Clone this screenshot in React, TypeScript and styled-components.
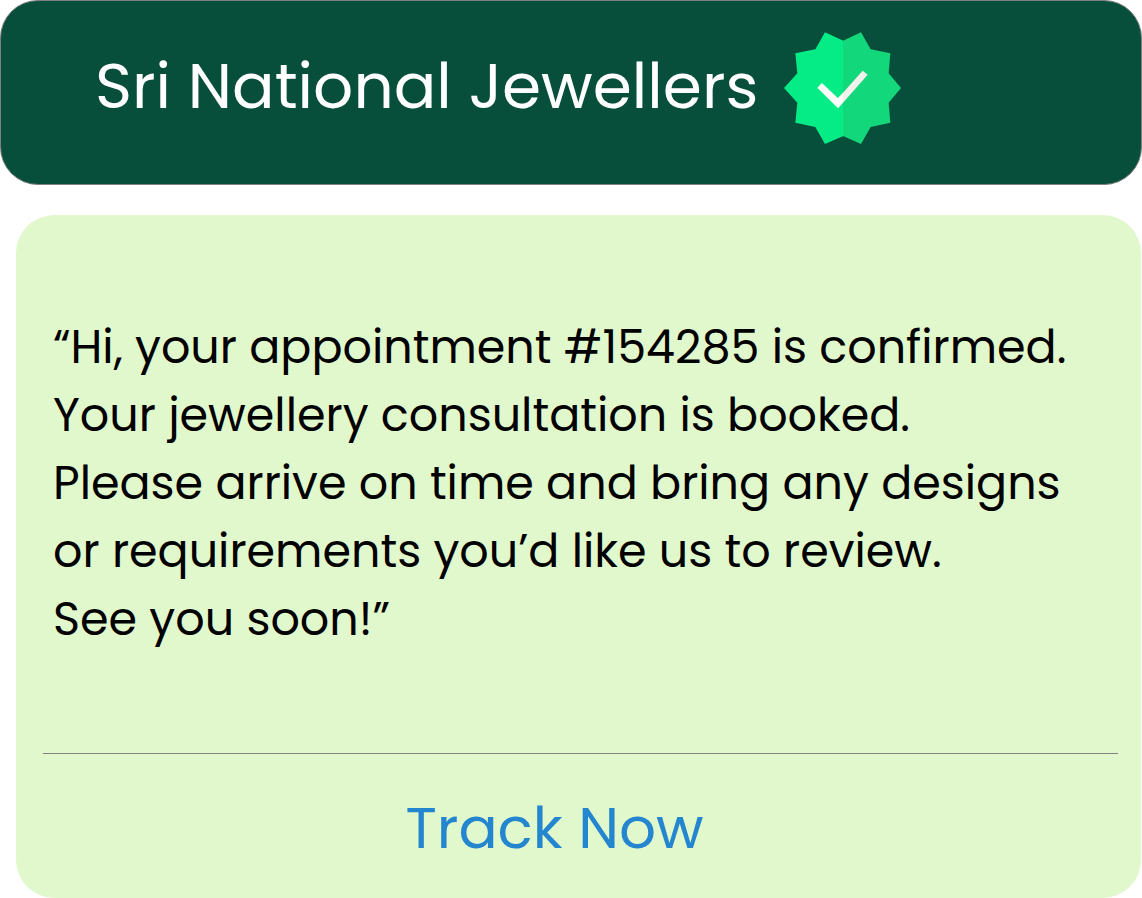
import React from "react";
import styled, { createGlobalStyle } from "styled-components";

const GlobalStyle = createGlobalStyle`
  body {
    margin: 0;
    background: #ffffff;
    font-family: Poppins, Inter, "Liberation Sans", sans-serif;
  }
`;

const Page = styled.main`
  display: flex;
  flex-direction: column;
  gap: 30px;
`;

const Header = styled.header`
  display: flex;
  align-items: flex-start;
  gap: 26px;
  padding: 31px 94px 40px;
  border: 1px solid #808080;
  border-radius: 38px;
  background: #084f3b;
`;

const Title = styled.h1`
  margin: 0;
  color: #ffffff;
  font-size: 63px;
  font-weight: 400;
  line-height: 108px;
  white-space: nowrap;
`;

const Badge = styled.svg`
  flex: none;
  display: block;
  width: 117px;
  height: 112px;
`;

const Card = styled.section`
  margin: 0 1px 0 16px;
  padding: 98px 23px 28px 27px;
  border-radius: 38px;
  background: #e1f8cd;
`;

const Message = styled.p`
  margin: 0;
  padding-left: 10px;
  color: #000000;
  font-size: 46px;
  line-height: 68px;
  white-space: nowrap;
`;

const Divider = styled.hr`
  margin: 100px 0 32px;
  border: 0;
  border-top: 1px solid #808080;
`;

const Actions = styled.div`
  display: flex;
  justify-content: center;
  padding-right: 52px;
`;

const TrackLink = styled.a`
  color: #2386cf;
  font-size: 58px;
  line-height: 84px;
  text-decoration: none;
`;

const lines = [
  "“Hi, your appointment #154285 is confirmed.",
  "Your jewellery consultation is booked.",
  "Please arrive on time and bring any designs",
  "or requirements you’d like us to review.",
  "See you soon!”",
];

const VerifiedBadge = () => (
  <Badge viewBox="42 36 351 336" preserveAspectRatio="none" role="img" aria-label="Verified">
    <path
      fill="#05eb85"
      d="M220 62 165 37 136 88 76 100 82 160 42 204 82 248 76 308 136 321 165 372 220 348Z"
    />
    <path
      fill="#12d77b"
      d="M219 62 273 37 302 88 361 100 356 160 393 204 356 248 361 308 302 321 273 372 219 348Z"
    />
    <path fill="#fffdf9" d="M156 189 204 235V265L142 203Z" />
    <path fill="#f5f0eb" d="M219 218 278 152 293 164 219 248Z" />
    <path fill="#fffdf9" d="M203 235 219 218V248L204 265Z" />
  </Badge>
);

export default function App() {
  return (
    <>
      <GlobalStyle />
      <Page>
        <Header>
          <Title>Sri National Jewellers</Title>
          <VerifiedBadge />
        </Header>
        <Card>
          <Message>
            {lines.map((line, i) => (
              <React.Fragment key={line}>
                {i > 0 && <br />}
                {line}
              </React.Fragment>
            ))}
          </Message>
          <Divider />
          <Actions>
            <TrackLink href="#track">Track Now</TrackLink>
          </Actions>
        </Card>
      </Page>
    </>
  );
}
